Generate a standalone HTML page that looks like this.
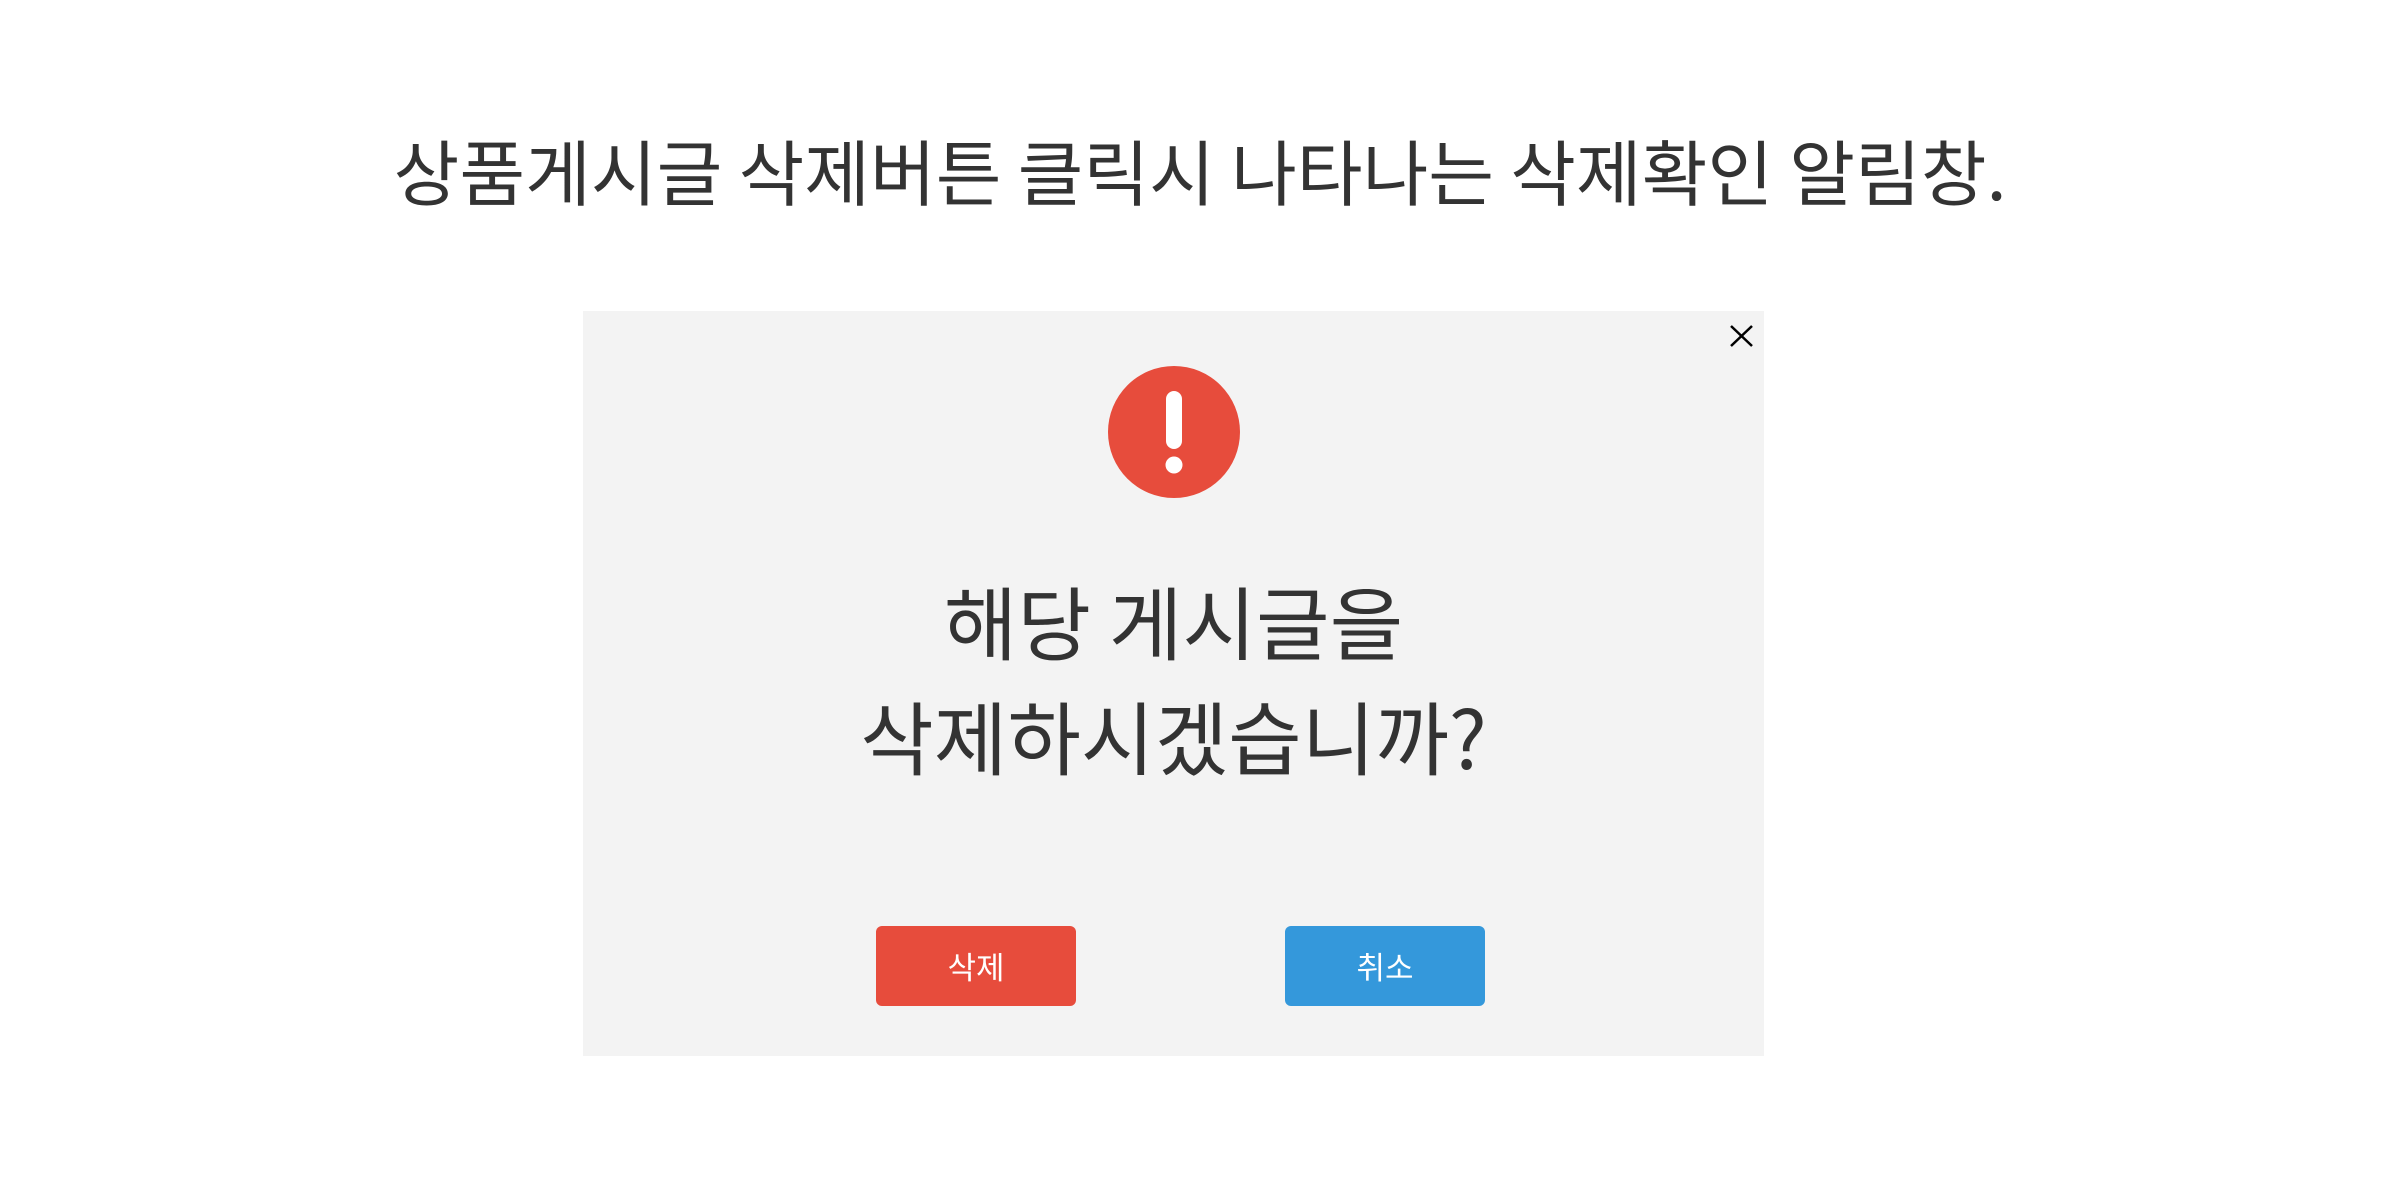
<!DOCTYPE html>
<html><head><meta charset="utf-8"><style>
body{margin:0;width:2400px;height:1200px;background:#fff;position:relative;overflow:hidden;font-family:"Noto Sans CJK KR","Liberation Sans",sans-serif;color:#333}
.t{position:absolute;left:0;width:2400px;text-align:center;top:119px;font-size:71.5px;line-height:100px;white-space:nowrap}
.m{position:absolute;left:583px;top:311px;width:1181px;height:745px;background:#f3f3f3}
.q{position:absolute;left:0;width:100%;text-align:center;font-size:80px;line-height:115px;top:252px}
.b{position:absolute;top:615px;width:200px;height:80px;border-radius:6px;color:#fff;font-size:31px;line-height:80px;text-align:center}
</style></head><body>
<div class="t">상품게시글 삭제버튼 클릭시 나타나는 삭제확인 알림창.</div>
<div class="m">
<svg style="position:absolute;left:0;top:0" width="1181" height="745">
<line x1="1148" y1="15" x2="1169" y2="35" stroke="#000" stroke-width="2.5"/>
<line x1="1169" y1="15" x2="1148" y2="35" stroke="#000" stroke-width="2.5"/>
<circle cx="591" cy="121" r="66" fill="#e74c3c"/>
<rect x="583" y="80" width="16" height="58" rx="8" fill="#fff"/>
<circle cx="591" cy="154" r="8.5" fill="#fff"/>
</svg>
<div class="q">해당 게시글을<br>삭제하시겠습니까?</div>
<div class="b" style="left:293px;background:#e74c3c">삭제</div>
<div class="b" style="left:702px;background:#3498db">취소</div>
</div>
</body></html>
